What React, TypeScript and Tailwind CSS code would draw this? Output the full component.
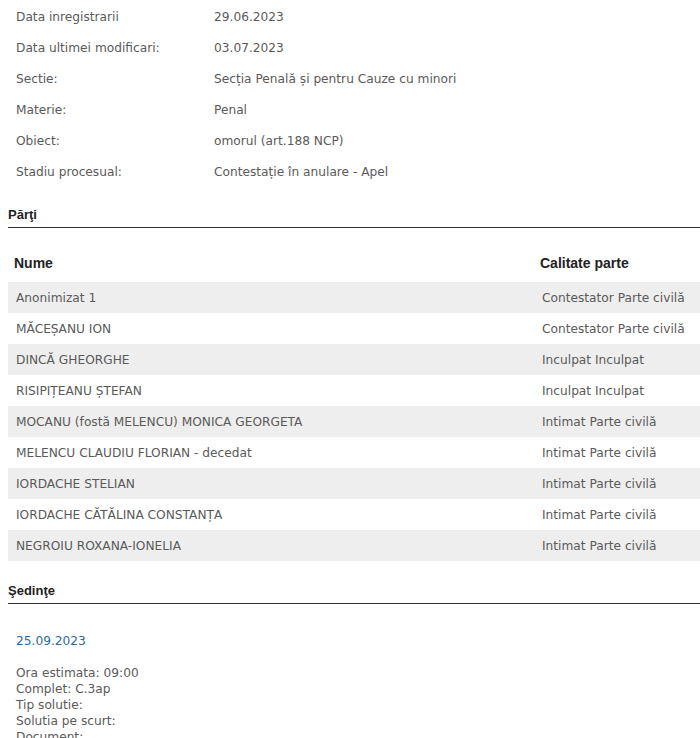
const info = [
  ['Data inregistrarii', '29.06.2023'],
  ['Data ultimei modificari:', '03.07.2023'],
  ['Sectie:', 'Secția Penală și pentru Cauze cu minori'],
  ['Materie:', 'Penal'],
  ['Obiect:', 'omorul (art.188 NCP)'],
  ['Stadiu procesual:', 'Contestație în anulare - Apel'],
]

const parti = [
  ['Anonimizat 1', 'Contestator Parte civilă'],
  ['MĂCEȘANU ION', 'Contestator Parte civilă'],
  ['DINCĂ GHEORGHE', 'Inculpat Inculpat'],
  ['RISIPIȚEANU ȘTEFAN', 'Inculpat Inculpat'],
  ['MOCANU (fostă MELENCU) MONICA GEORGETA', 'Intimat Parte civilă'],
  ['MELENCU CLAUDIU FLORIAN - decedat', 'Intimat Parte civilă'],
  ['IORDACHE STELIAN', 'Intimat Parte civilă'],
  ['IORDACHE CĂTĂLINA CONSTANȚA', 'Intimat Parte civilă'],
  ['NEGROIU ROXANA-IONELIA', 'Intimat Parte civilă'],
]

function SectionTitle({ title }: { title: string }) {
  return (
    <div className="border-b border-[#333] pb-[4px] font-['Liberation_Sans',Arial,sans-serif] text-[13px] leading-[16px] font-bold text-[#222]">
      {title}
    </div>
  )
}

export default function App() {
  return (
    <div className="min-h-screen bg-white pl-2 font-['DejaVu_Sans',Tahoma,sans-serif] text-[12.2px] text-[#5a5a5a]">
      {/* Dosar info */}
      <div className="flex flex-col pt-[2px]">
        {info.map(([label, value]) => (
          <div key={label} className="flex h-[31px] items-center">
            <div className="w-[206px] pl-2">{label}</div>
            <div>{value}</div>
          </div>
        ))}
      </div>

      {/* Parti */}
      <div className="mt-[19px]">
        <SectionTitle title="Părţi" />
      </div>
      <div className="mt-[21px]">
        <div className="flex h-[33px] items-center pb-[4px] font-['Liberation_Sans',Arial,sans-serif] text-[14px] font-bold text-[#222]">
          <div className="flex-1 pl-[6px]">Nume</div>
          <div className="w-[160px]">Calitate parte</div>
        </div>
        {parti.map(([nume, calitate], i) => (
          <div
            key={nume}
            className={`flex h-[31px] items-center pt-[1px] ${i % 2 === 0 ? 'bg-[#eeeeee]' : 'bg-white'}`}
          >
            <div className="flex-1 pl-2">{nume}</div>
            <div className="w-[158px]">{calitate}</div>
          </div>
        ))}
      </div>

      {/* Sedinte */}
      <div className="mt-[22px]">
        <SectionTitle title="Şedinţe" />
      </div>
      <div className="pl-2 pt-[29px]">
        <div className="leading-[16px] text-[#2a6aa0]">25.09.2023</div>
        <div className="mt-[16px] flex flex-col leading-[16px]">
          <span>Ora estimata: 09:00</span>
          <span>Complet: C.3ap</span>
          <span>Tip solutie:</span>
          <span>Solutia pe scurt:</span>
          <span>Document:</span>
        </div>
      </div>
    </div>
  )
}
